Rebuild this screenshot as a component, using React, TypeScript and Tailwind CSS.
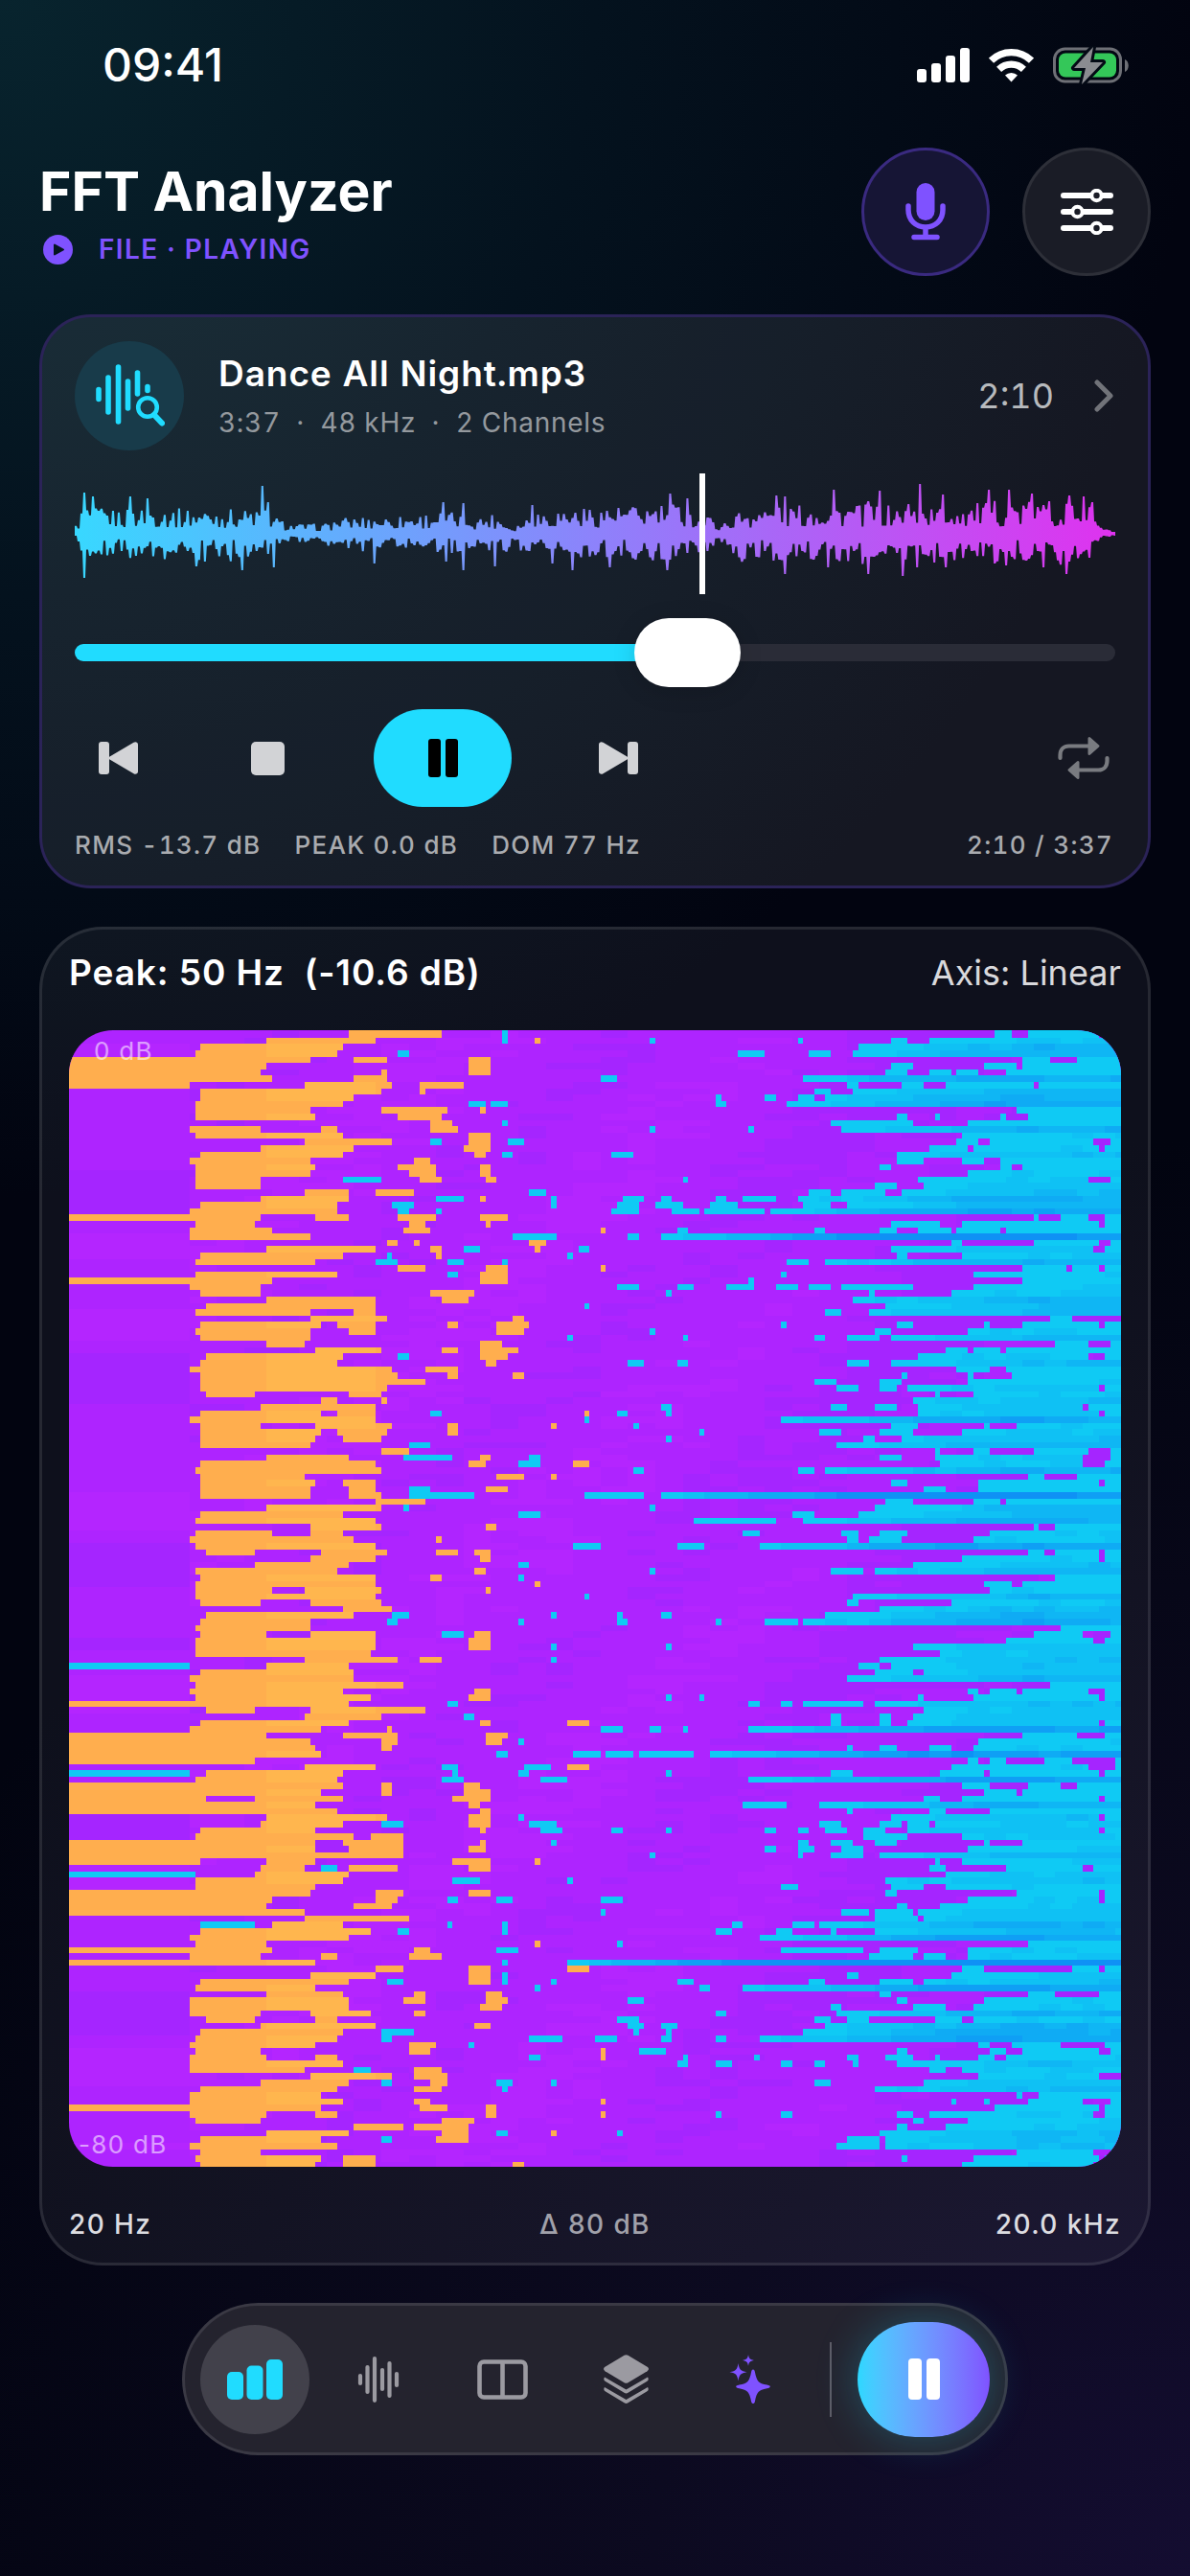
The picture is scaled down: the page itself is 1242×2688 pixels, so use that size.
import { useState, type ReactNode } from 'react';

const COLS = 192;
const ROWS = 180;

// One line per time slice: loud runs | quiet runs, as start-end columns.
const SLICES = `51-68|79-80 169-172 175-188 189-192
36-56 85-86|79-80 106-107 133-134 150-153 157-192
24-50|144-192
23-49|60-62 122-127 135-139 143-192
0-44 52-58 73-77|174-179 184-192
0-36 73-77|150-154 167-173 174-192
0-35 57-58 73-77|149-153 157-161 162-166 171-192
0-37 52-58|97-100 134-192
0-22 43-59 64-72|142-144 152-156 160-176 177-192
24-57 64-65|136-139 143-192
24-52|118-119 127-129 133-136 138-192
23-50|73-76 77-80 118-120 131-192
23-44 57-69 75-76|173-192
23-45 60-68|151-153 158-159 170-171 175-192
66-70|79-80 139-154 164-192
22-35 46-49 66-71|106-107 124-125 141-192
23-50 73-77|163-192
43-59 73-77|66-68 80-83 162-166 168-187 190-192
35-52 72-77|157-164 165-188 189-192
24-50 74-76|79-81 99-103 151-192
22-44 63-66|151-156 163-167 170-192
23-45 60-67 75-77|148-150 170-172 174-192
23-44 62-67 75-77|164-192
23-35 64-68 76-78|50-57 112-113 155-186 190-192
23-35|147-151 156-192
43-51 56-63|84-87 135-139 141-149 152-192
35-51 75-76|67-72 88-89 101-105 108-110 118-120 123-129 133-192
24-49|59-63 88-89 100-104 107-112 117-122 134-139 142-192
22-49|60-62 67-68 99-104 110-115 116-127 128-192
0-35 45-51 60-67 75-80|176-177 181-186 189-192
23-34 62-65 76-77|150-159 163-188 189-192
22-37 61-66 97-98|111-113 136-138 148-151 155-161 162-170 171-192
22-44|81-89 102-104 108-192
58-60 63-64 84-87|161-163 176-188 190-192
36-56 66-68 85-86|72-75 93-95 150-187 189-192
24-50 67-68|58-59 91-92 151-153 163-192
23-45|56-60 69-72 79-80 131-135 138-192
60-65 76-80 97-98|174-182 183-188 189-192
23-49 75-80|69-71 130-131 165-192
0-37 75-80|124-125 174-192
22-35|100-104 111-114 120-125 129-133 135-139 141-154 165-192
24-35 66-74|109-110 146-147 161-192
36-56 68-73|143-192
25-56|94-95 149-192
23-44 52-56|138-141 146-192
44-58 81-83|179-183
24-46 49-56 69-71 78-84|130-131 151-154 167-168 174-188 189-192
23-44 51-56 78-83|106-107 147-150 164-192
24-44|91-92 112-113 136-138 142-148 150-192
36-43 75-79|180-186 190-192
45-57 68-71 75-82|160-164 165-170 171-192
25-50 75-80|60-62 155-186 189-192
24-49 76-78|102-105 111-113 142-146 150-192
22-59 65-71|162-168 171-192
24-60 69-71 81-83|152-153 164-165 172-192
24-65|136-140 148-152 164-192
24-58|140-144 148-151 153-188 189-192
25-34 51-57|158-159 165-192
46-49 57-58|154-192
35-56|108-110 139-142 147-151 155-185 186-192
24-46 49-56 94-95|66-68 100-102 109-110 155-188 189-192
22-56|94-95 130-192
24-35 45-59 69-71 88-89|103-104 150-155 167-168 173-192
24-46 49-58 69-71|115-116 137-141 148-154 163-192
24-45 50-57|109-110 145-147 152-192
24-44|62-66 140-192
57-62|158-159 165-168 176-186 190-192
36-51 75-77|61-70 84-86 148-152 158-185 190-192
24-56 73-76 92-95|82-86 159-185 189-192
23-57|103-105 133-136 138-192
24-43 78-83 88-89|175-178 184-192
24-45 50-56|150-153 166-188 189-192
24-44 51-56 76-80|62-66 156-160 166-192
24-44 51-57|62-74 94-105 108-192
56-65|149-154 165-170 171-192
36-57|61-62 106-107 147-192
24-50|82-86 132-136 144-192
23-56|114-129 134-192
44-57 76-78|176-177 180-192
23-37 44-50|123-126 141-144 148-153 168-192
22-52 67-68|142-144 146-152 165-192
23-56|92-97 111-116 126-192
25-34 46-58 67-71 74-77|175-178 180-188 189-192
44-56 75-77|163-188 189-192
34-51|82-84 154-192
23-49 74-76|106-107 139-145 147-192
24-56 66-68|82-83 180-192
23-56 85-86|167-172 174-192
23-37 43-57 76-77|168-192
23-56|94-95 143-192
24-35 44-57|142-144 161-192
50-59|148-192
25-52|59-62 88-89 100-101 108-110 138-192
24-44|58-60 82-83 100-102 118-119 127-133 134-192
23-44|181-192
24-36 44-56 74-77|68-72 176-185 190-192
23-56 73-77|171-187 189-192
23-56 73-77|88-89 109-110 154-192
23-55|159-192
43-60 64-68|88-89 148-192
36-51|0-22 144-148 150-192
24-52|147-154 156-192
22-52|142-192
23-61|179-192
22-50 74-77|164-166 168-173 174-186 189-192
23-55 73-77|109-110 115-116 155-156 165-188 189-192
0-51|69-71 124-126 130-132 134-145 147-192
25-34 44-65|156-192
43-57|72-74 139-141 148-150 154-192
24-51 75-77 91-95|139-141 148-150 153-188 189-192
22-46 58-59|97-101 106-108 112-113 124-192
0-36 50-60 76-80|174-184 189-192
0-44 57-60 76-79|82-83 166-192
0-45 57-59|142-143 148-151 157-161 165-192
0-46|78-80 92-97 98-103 104-114 117-192
0-34|164-166 168-171 178-183 191-192
43-56 91-95|68-71 83-88 161-186 191-192
25-50|0-22 70-71 82-84 109-110 139-143 159-167 168-188 189-192
23-49|68-72 86-91 124-192
0-50 57-59 72-75|163-168 175-181 184-192
0-46 57-59 72-77|167-173 174-192
0-25 34-50 70-77|156-159 163-188 189-192
0-45 73-75|123-131 137-192
0-49 75-77|142-143 157-160 168-192
36-58 73-77|82-83 150-188 189-192
35-50 73-77|57-61 84-89 137-141 148-152 153-157 158-192
24-45 75-76|86-90 99-101 109-110 127-129 133-135 138-142 145-149 153-188 189-192
23-52 55-61|145-153 163-192
0-45 50-61 75-76|88-89 133-135 139-143 147-151 167-168 174-192
0-45 51-61 73-76|127-129 133-136 141-145 164-192
0-61|106-107 133-134 139-145 148-192
0-24 36-45 70-77 85-86|158-159 163-192
35-43 51-60 73-77|46-49 157-160 171-185 187-192
34-51|0-23 160-192
23-50|70-75 91-92 149-192
23-45|130-133 150-156 160-192
0-44 56-61 73-77|149-151 173-188 189-192
0-37 56-60|69-71 78-81 97-101 164-188 189-192
0-36 52-59|151-153 159-192
0-43|97-98 141-146 147-154 155-192
43-62|147-155 156-192
37-50|24-34 69-70 79-80 121-123 132-136 137-192
24-55|60-62 79-80 118-121 129-132 139-140 147-192
22-51|126-192
23-36 85-86|100-101 175-192
0-37 63-66|78-82 130-145 148-155 164-192
22-35 46-49 62-68|146-154 156-160 164-192
0-45|79-80 91-192
56-61 73-77 91-95|163-167 183-188 189-192
44-56 73-77|79-80 142-144 161-192
24-51 73-77|58-61 79-80 88-89 111-114 135-138 148-154 156-192
23-45|85-86 115-117 123-192
36-50 63-65 76-79|148-150 175-180 188-192
22-51 61-65 76-80|102-105 151-153 167-192
22-51 75-79|139-141 154-160 165-192
22-35 44-55 63-65|118-120 140-192
25-34 45-49|100-104 136-139 142-146 158-163 165-192
35-56 74-77|102-105 108-111 138-192
24-50|57-63 103-104 109-110 134-192
23-49|57-59 84-90 96-100 108-110 118-120 126-192
22-45 62-67|73-74 166-168 172-181 189-192
23-35 62-66 97-98|104-109 151-153 168-171 174-188 190-192
22-36 45-49 97-98|84-86 112-113 125-126 142-144 149-154 158-159 166-169 171-192
22-50|111-113 118-121 130-132 136-138 143-144 151-192
22-43 63-68|52-55 157-160 163-192
44-59 63-69|166-188
35-51 66-69|57-59 78-81 88-89 136-139 156-192
24-49 63-68|79-80 147-192
22-46|173-174 177-192
22-50 63-66 97-98|161-162 167-168 175-185 190-192
0-46 64-69 76-78|169-188 189-192
22-36 45-49 76-78 97-98|118-119 130-132 151-154 157-187 189-192
23-35 68-74|154-156 164-192
52-61 63-73|151-153 160-192
36-51 68-73 88-89|78-80 100-101 148-192
24-46 67-73|57-59 142-148 149-192
22-49|140-148 149-192
24-35|173-187 190-192
23-46 50-56|152-153 165-188 189-192
24-45 50-56 81-83|163-187 189-192`.split('\n');

const QUIET_SHADES = ['#0fcaf4', '#0fc1f4', '#0fb6f4', '#0fabf4', '#0f9ff5', '#0f91f5'];
const MID_SHADES = ['#ae24ff', '#b826ff', '#a325ff'];

// Repeatable value between 0 and 1.
function noise(a: number, b: number) {
  const n = Math.sin(a * 127.1 + b * 311.7) * 43758.5453;
  return n - Math.floor(n);
}

function buildSpectrogram() {
  const loud = ['', ''];
  const quiet = QUIET_SHADES.map(() => '');
  const mid = MID_SHADES.map(() => '');
  const rect = (x: number, y: number, w: number) => `M${x} ${y}h${w}v1h${-w}z`;

  SLICES.forEach((slice, y) => {
    const [o, c] = slice.split('|').map((part) =>
      part.split(' ').filter(Boolean).map((run) => run.split('-').map(Number))
    );

    // slow drift of the mid level, one block on the left and smaller ones after it
    for (let x = 0; x < COLS; x = x === 0 ? 22 : x + 5) {
      const drift =
        x === 0
          ? Math.sin(y / 2.3) * 0.5 + Math.sin(y / 5.1) * 0.5
          : Math.sin(x / 9 + y / 7) * 0.4 + noise(x, y) * 0.7 - 0.2 - Math.max(0, x - 100) / 90;
      const w = x === 0 ? 22 : 5;
      if (drift > 0.45) mid[1] += rect(x, y, Math.min(w, COLS - x));
      else if (drift < -0.35) mid[2] += rect(x, y, Math.min(w, COLS - x));
    }

    o.forEach(([from, to]) => {
      loud[0] += rect(from, y, to - from);
      const a = Math.max(from, 36);
      const b = Math.min(to, 56);
      if (b - a > 8 && noise(y, 3) > 0.4) loud[1] += rect(a, y, b - a);
    });

    const main = c.reduce((best, run) => (run[1] - run[0] > best[1] - best[0] ? run : best), [0, 0]);
    const depth = Math.max(0, (main[1] - main[0] - 18) / 13);
    c.forEach(([from, to]) => {
      for (let x = from; x < to; x += 4) {
        const rise = Math.min(1, Math.max(0, (x - main[0]) / 34)) * (x > 176 ? 0.8 : 1);
        const shade = to - from > 16 ? Math.round(depth * rise + noise(x, y) * 0.8 - 0.3) : 0;
        quiet[Math.max(0, Math.min(5, shade))] += rect(x, y, Math.min(4, to - x));
      }
    });
  });
  return { loud, quiet, mid };
}

const spectrogram = buildSpectrogram();

function Spectrogram() {
  return (
    <svg
      className="block aspect-[1098/1186] w-full"
      viewBox={`0 -0.2 ${COLS} ${ROWS}`}
      preserveAspectRatio="none"
      shapeRendering="crispEdges"
      role="img"
      aria-label="Spectrogram"
    >
      <rect y="-1" width={COLS} height={ROWS + 2} fill={MID_SHADES[0]} />
      <path d={spectrogram.mid[1]} fill={MID_SHADES[1]} opacity="0.6" />
      <path d={spectrogram.mid[2]} fill={MID_SHADES[2]} opacity="0.8" />
      <path d={spectrogram.loud[0]} fill="#ffae4e" />
      <path d={spectrogram.loud[1]} fill="#ffb64e" />
      {spectrogram.quiet.map((d, i) => (
        <path key={i} d={d} fill={QUIET_SHADES[i]} />
      ))}
      <path d="M51 -.2h17v.4h-17z" fill="#ffae4e" />
      <path d="M79 -.2h1v.4h-1zM169 -.2h3v.4h-3zM175 -.2h13v.4h-13zM189 -.2h3v.4h-3z" fill="#0fcaf4" />
    </svg>
  );
}

// x, level above and level below the centre line
const ENVELOPE = [
  [0, 8, 4], [8, 28, 24], [40, 23, 23], [80, 26, 25], [120, 24, 27], [160, 24, 27], [200, 24, 24], [212, 14, 12],
  [225, 9, 7], [260, 9, 9], [276, 15, 18], [330, 17, 15], [360, 19, 14], [383, 22, 20], [421, 16, 13], [438, 20, 18],
  [456, 5, 20], [480, 23, 16], [520, 25, 22], [560, 27, 25], [600, 27, 26], [630, 30, 30], [645, 20, 18], [660, 18, 17],
  [676, 9, 11], [695, 24, 28], [740, 27, 26], [800, 29, 30], [860, 27, 28], [900, 26, 28], [960, 32, 28], [1000, 31, 28],
  [1040, 30, 34], [1060, 26, 18], [1068, 10, 7], [1076, 4, 3], [1087, 1, 1],
];
const PEAKS_UP: Record<number, number> = {
  3: 42, 6: 38, 19: 38, 25: 36, 65: 49, 67: 32, 128: 32, 135: 31, 159: 29, 207: 41, 213: 36, 244: 39, 247: 38, 264: 45,
  276: 33, 280: 44, 290: 30, 294: 51, 302: 40, 318: 45, 325: 45, 333: 41, 339: 33, 346: 39, 351: 38, 354: 32,
};
const PEAKS_DOWN: Record<number, number> = {
  3: 45, 42: 33, 58: 37, 69: 34, 104: 30, 129: 28, 135: 37, 146: 33, 166: 30, 173: 37, 186: 34, 206: 37, 247: 41, 262: 34,
  276: 41, 288: 43, 293: 34, 303: 34, 320: 30, 324: 32, 337: 34, 345: 41, 353: 24,
};

function wavePath() {
  const top: string[] = [];
  const bottom: string[] = [];
  for (let i = 0; i <= 362; i++) {
    const x = i * 3;
    const next = Math.max(1, ENVELOPE.findIndex((p) => p[0] >= x));
    const [x0, u0, d0] = ENVELOPE[next - 1];
    const [x1, u1, d1] = ENVELOPE[next];
    const t = (x - x0) / (x1 - x0);
    const up = PEAKS_UP[i] ?? (u0 + (u1 - u0) * t) * (0.2 + 0.85 * noise(i, 1));
    const down = PEAKS_DOWN[i] ?? (d0 + (d1 - d0) * t) * (0.2 + 0.85 * noise(i, 2));
    top.push(`${x} ${(62 - up).toFixed(1)}H${x + 2}`);
    bottom.unshift(`${x + 2} ${(64 + down).toFixed(1)}H${x}`);
  }
  return `M${top.join('L')}L${bottom.join('L')}Z`;
}

const WAVE = wavePath();

function Waveform({ progress }: { progress: number }) {
  return (
    <div className="relative mt-6">
      <svg className="block h-[126px] w-full" viewBox="0 0 1087 126" preserveAspectRatio="none" aria-hidden="true">
        <defs>
          <linearGradient id="wave" x1="0" x2="1">
            <stop offset="0" stopColor="#38d8ff" />
            <stop offset="0.5" stopColor="#8d82fb" />
            <stop offset="1" stopColor="#df32ef" />
          </linearGradient>
        </defs>
        <path d={WAVE} fill="url(#wave)" />
      </svg>
      <span className="absolute inset-y-0 w-1.5 bg-white" style={{ left: `${progress}%` }} />
    </div>
  );
}

function StatusBar() {
  return (
    <div className="flex h-[136px] items-center justify-between pr-16 pl-[107px]">
      <time className="text-[48px] leading-none font-medium">09:41</time>
      <div className="flex items-center gap-5">
        <svg className="h-9 w-[55px]" viewBox="0 0 55 36" fill="#fff" aria-hidden="true">
          <rect y="22" width="10" height="14" rx="3" />
          <rect x="15" y="16" width="10" height="20" rx="3" />
          <rect x="30" y="8" width="10" height="28" rx="3" />
          <rect x="45" width="10" height="36" rx="3" />
        </svg>
        <svg className="h-9 w-[47px]" viewBox="0 0 47 36" fill="none" stroke="#fff" aria-hidden="true">
          <path d="M2.5 13.2a30 30 0 0 1 42 0" strokeWidth="7.4" />
          <path d="M10.6 22.4a18.3 18.3 0 0 1 25.8 0" strokeWidth="7.2" />
          <path d="M17 28.5a9.5 9.5 0 0 1 13 0L23.5 35.5z" fill="#fff" stroke="none" />
        </svg>
        <svg className="h-10 w-[79px]" viewBox="0 0 79 40" aria-hidden="true">
          <rect x="1.5" y="3" width="69" height="34" rx="11" fill="none" stroke="#6e7076" strokeWidth="3" />
          <rect x="6" y="7.5" width="60" height="25" rx="7" fill="#34c759" />
          <path d="M75 14c5 2 5 11 0 13z" fill="#6e7076" />
          <path d="M42 1 22 23h12l-4 17 22-23H39z" fill="#8b8c91" stroke="#040a15" strokeWidth="6" strokeLinejoin="round" paintOrder="stroke" />
        </svg>
      </div>
    </div>
  );
}

function Header() {
  return (
    <header className="flex items-center justify-between pt-[18px]">
      <div className="flex flex-col gap-1.5">
        <h1 className="text-[57px] leading-[72px] font-bold">FFT Analyzer</h1>
        <p className="flex items-center gap-[27px] text-[28px] leading-9 font-semibold tracking-wider text-[#7f52ff]">
          <svg className="ml-1 size-[31px]" viewBox="0 0 31 31" aria-hidden="true">
            <circle cx="15.5" cy="15.5" r="15.5" fill="#7f52ff" />
            <path d="M12 10.5v10l9-5z" fill="#051520" stroke="#051520" strokeWidth="2" strokeLinejoin="round" />
          </svg>
          FILE · PLAYING
        </p>
      </div>
      <div className="flex gap-[34px]">
        <button
          aria-label="Microphone"
          className="flex size-[134px] items-center justify-center rounded-full border-3 border-[#3a2a80] bg-[#161535]"
        >
          <svg className="h-[60px] w-[42px]" viewBox="0 0 42 60" fill="none" stroke="#7f52ff" aria-hidden="true">
            <rect x="11.5" y="0" width="19" height="39" rx="9.5" fill="#7f52ff" stroke="none" />
            <path d="M3 24v4c0 11 8 18 18 18s18-7 18-18v-4M21 46v10M9 56.5h24" strokeWidth="5.5" strokeLinecap="round" />
          </svg>
        </button>
        <button
          aria-label="Settings"
          className="flex size-[134px] items-center justify-center rounded-full border-3 border-[#2d2f38] bg-[#1a1c26]"
        >
          <svg className="h-12 w-[55px]" viewBox="0 0 55 48" fill="#1a1c26" stroke="#fff" strokeLinecap="round" aria-hidden="true">
            <path d="M3 7h49M3 24h49M3 41h49" strokeWidth="6" />
            <g strokeWidth="4">
              <circle cx="37.5" cy="7" r="5.2" />
              <circle cx="17.5" cy="24" r="5.2" />
              <circle cx="37.5" cy="41" r="5.2" />
            </g>
          </svg>
        </button>
      </div>
    </header>
  );
}

function SkipIcon({ flip = false }: { flip?: boolean }) {
  return (
    <svg className={flip ? 'h-[34px] w-[41px] -scale-x-100' : 'h-[34px] w-[41px]'} viewBox="0 0 41 34" fill="#d2d3d6" aria-hidden="true">
      <rect width="11" height="34" rx="3" />
      <path d="M11.5 15.4 36.5.8C38.5-.4 41 .6 41 3v28c0 2.4-2.5 3.4-4.5 2.2L11.5 18.6c-1.4-.8-1.4-2.4 0-3.2z" />
    </svg>
  );
}

function PlayerCard() {
  const total = 217;
  const [time, setTime] = useState(130);
  const fill = (time / total) * 100;

  return (
    <section className="mt-10 rounded-[54px] border-3 border-[#2b2358] bg-white/8 px-[34px] pt-[25px] pb-[26px] tabular-nums">
      <div className="flex items-center">
        <span className="flex size-[114px] items-center justify-center rounded-full bg-[#183b4a]">
          <svg className="h-[78px] w-[74px]" viewBox="0 0 74 78" fill="none" stroke="#20dcff" strokeWidth="5.6" strokeLinecap="round" aria-hidden="true">
            <path d="M5 32.5v10M15 20v36M25.5 9v57M35.5 24v28M45.5 15v22M56 29.5v4" />
            <circle cx="56" cy="51" r="9.8" strokeWidth="4.6" />
            <path d="m63 59 8 8.5" strokeWidth="6" />
          </svg>
        </span>
        <div className="ml-9 flex-1 pt-1">
          <h2 className="text-[37px] leading-[52px] font-semibold tracking-wide">Dance All Night.mp3</h2>
          <p className="text-[28px] leading-[50px] tracking-wide whitespace-pre text-[#94999e]">3:37  ·  48 kHz  ·  2 Channels</p>
        </div>
        <span className="text-[36px] text-[#b7babd]">2:10</span>
        <svg className="mr-0.5 ml-[42px] h-9 w-[20px]" viewBox="0 0 20 36" fill="none" stroke="#717379" strokeWidth="5" strokeLinecap="round" strokeLinejoin="round" aria-hidden="true">
          <path d="m3 4 14 14L3 32" />
        </svg>
      </div>

      <Waveform progress={60} />

      <input
        type="range"
        aria-label="Position"
        min={0}
        max={total}
        value={time}
        onChange={(e) => setTime(Number(e.target.value))}
        style={{ backgroundImage: `linear-gradient(to right, #20dcff ${fill}%, #2a2c37 ${fill}%)` }}
        className="mt-[52px] mb-[50px] block h-[18px] w-full appearance-none rounded-full [&::-webkit-slider-thumb]:h-[72px] [&::-webkit-slider-thumb]:w-[111px] [&::-webkit-slider-thumb]:appearance-none [&::-webkit-slider-thumb]:rounded-[36px] [&::-webkit-slider-thumb]:bg-white [&::-webkit-slider-thumb]:shadow-[0_4px_24px_rgba(0,0,0,0.15)]"
      />

      <div className="flex items-center gap-[66px]">
        <button aria-label="Previous" className="flex h-[90px] w-[90px] items-center justify-center">
          <SkipIcon />
        </button>
        <button aria-label="Stop" className="flex h-[90px] w-[90px] items-center justify-center">
          <span className="size-[35px] rounded-[5px] bg-[#d2d3d6]" />
        </button>
        <button aria-label="Pause" className="flex h-[102px] w-36 items-center justify-center gap-[5px] rounded-[51px] bg-[#20dcff]">
          <span className="h-10 w-[13px] rounded-[3px] bg-black" />
          <span className="h-10 w-[13px] rounded-[3px] bg-black" />
        </button>
        <button aria-label="Next" className="flex h-[90px] w-[90px] items-center justify-center">
          <SkipIcon flip />
        </button>
        <button aria-label="Repeat" className="ml-auto flex h-[90px] w-[66px] items-center justify-center">
          <svg className="h-[46px] w-[54px]" viewBox="0 0 54 46" fill="none" stroke="#797b80" strokeWidth="4.2" strokeLinecap="round" aria-hidden="true">
            <path d="M2.5 23v-3c0-6 4-9.5 9-9.5h21M51.5 23v3c0 6-4 9.5-9 9.5h-21" />
            <path d="M33 2.5v16l9-8zM21 27.5v16l-9-8z" fill="#797b80" strokeWidth="3" strokeLinejoin="round" />
          </svg>
        </button>
      </div>

      <div className="mt-6 flex gap-[35px] text-[26px] leading-8 font-medium tracking-wider text-[#a9abaf]">
        <span>RMS -13.7 dB</span>
        <span>PEAK 0.0 dB</span>
        <span>DOM 77 Hz</span>
        <span className="ml-auto pr-0.5">2:10 / 3:37</span>
      </div>
    </section>
  );
}

function SpectrumCard() {
  return (
    <section className="mt-10 rounded-[66px] border-3 border-white/10 bg-white/5 px-7 pt-[21px] pb-[22px]">
      <div className="flex items-center justify-between leading-[48px]">
        <h2 className="text-[37px] font-semibold tracking-wide whitespace-pre">Peak: 50 Hz  (-10.6 dB)</h2>
        <span className="text-[36px] text-[#d9d9dc]">Axis: Linear</span>
      </div>
      <div className="relative mt-9 overflow-hidden rounded-[46px] text-[26px] leading-8 tracking-wider text-white/55">
        <Spectrogram />
        <span className="absolute top-1.5 left-[26px]">0 dB</span>
        <span className="absolute bottom-[7px] left-2.5">-80 dB</span>
      </div>
      <div className="mt-[42px] grid grid-cols-3 text-[28px] leading-9 font-medium tracking-wider text-[#dcdce0]">
        <span>20 Hz</span>
        <span className="text-center text-[#a1a1aa]">Δ 80 dB</span>
        <span className="text-right">20.0 kHz</span>
      </div>
    </section>
  );
}

function TabButton({ label, active = false, children }: { label: string; active?: boolean; children: ReactNode }) {
  return (
    <button
      aria-label={label}
      aria-pressed={active}
      className={`flex size-[114px] items-center justify-center rounded-full ${active ? 'bg-[#42414b]' : ''}`}
    >
      {children}
    </button>
  );
}

function TabBar() {
  return (
    <nav className="mx-auto mt-[39px] flex h-[159px] w-fit items-center rounded-[80px] border-3 border-[#3a3944] bg-[#24232e] px-4">
      <div className="flex gap-[15px]">
        <TabButton label="Bars" active>
          <svg className="h-[42px] w-[58px]" viewBox="0 0 58 42" fill="#20dcff" aria-hidden="true">
            <rect y="13" width="17" height="29" rx="5" />
            <rect x="20.5" y="6.5" width="17" height="35.5" rx="5" />
            <rect x="41" width="17" height="42" rx="5" />
          </svg>
        </TabButton>
        <TabButton label="Waveform">
          <svg className="h-12 w-11" viewBox="0 0 44 48" fill="none" stroke="#9b9aa1" strokeWidth="4.2" strokeLinecap="round" aria-hidden="true">
            <path d="M3 20v8M10.5 11v26M18 2.2v43.6M26 14v20M33.5 7v34M41 18v12" />
          </svg>
        </TabButton>
        <TabButton label="Split">
          <svg className="h-[42px] w-[53px]" viewBox="0 0 53 42" fill="none" stroke="#9b9aa1" strokeWidth="4.6" aria-hidden="true">
            <rect x="2.5" y="2.5" width="48" height="37" rx="4.5" />
            <path d="M26.5 2v38" />
          </svg>
        </TabButton>
        <TabButton label="Layers">
          <svg className="h-[51px] w-[47px]" viewBox="0 0 47 51" fill="#9b9aa1" aria-hidden="true">
            <path d="M21.5.8q2-1 4 0l20 12q3 2.2 0 4.4l-20 12q-2 1-4 0l-20-12q-3-2.2 0-4.4z" />
            <path d="M1 23.5 23.5 36.5 46 23.5q1.8 3-1 4.6L25.5 39.8q-2 1.2-4 0L2 28.1q-2.8-1.6-1-4.6z" />
            <path d="M1 34 23.5 47 46 34q1.8 3-1 4.6L25.5 50.3q-2 1.2-4 0L2 38.6q-2.8-1.6-1-4.6z" />
          </svg>
        </TabButton>
        <TabButton label="Effects">
          <svg className="h-[51px] w-[43px]" viewBox="0 0 43 51" fill="#7f52ff" aria-hidden="true">
            <path d="M25 15.5c1.2 0 1.6 1 1.9 2.4 2 10 3.6 12 12.6 13.7 4.4.9 4.4 2.7 0 3.6-9 1.7-10.6 3.7-12.6 13.7-.6 2.8-3.2 2.8-3.8 0-2-10-3.6-12-12.6-13.7-4.4-.9-4.4-2.7 0-3.6 9-1.7 10.6-3.7 12.6-13.7.3-1.4.7-2.4 1.9-2.4z" />
            <path d="M9.5 9c1 6.5 2.5 8.2 9 9.2-6.5 1-8 2.7-9 9.2-1-6.5-2.5-8.2-9-9.2 6.5-1 8-2.7 9-9.2zM20 0c.7 4.2 1.8 5.2 6 5.9-4.2.7-5.3 1.7-6 5.9-.7-4.2-1.8-5.2-6-5.9 4.2-.7 5.3-1.7 6-5.9z" />
          </svg>
        </TabButton>
      </div>
      <span className="mx-[27px] h-[78px] w-0.5 bg-[#5d5c66]" />
      <button
        aria-label="Pause analysis"
        className="flex h-[120px] w-[138px] items-center justify-center gap-[5px] rounded-[60px] bg-linear-to-r from-[#2cd8ff] to-[#7f52ff] shadow-[0_0_44px_rgba(32,220,255,0.25)]"
      >
        <span className="h-[43px] w-[14px] rounded-[4px] bg-white" />
        <span className="h-[43px] w-[14px] rounded-[4px] bg-white" />
      </button>
    </nav>
  );
}

export default function App() {
  return (
    <div className="min-h-screen bg-[#020410] bg-[radial-gradient(circle_at_0_0,#08242e_0,#04121e_620px,transparent_1250px),radial-gradient(circle_at_100%_100%,#140d31_0,#0c0a20_560px,transparent_1500px)] font-['Inter','Liberation_Sans',sans-serif] text-white">
      <StatusBar />
      <main className="px-[41px] pb-20">
        <Header />
        <PlayerCard />
        <SpectrumCard />
        <TabBar />
      </main>
    </div>
  );
}
